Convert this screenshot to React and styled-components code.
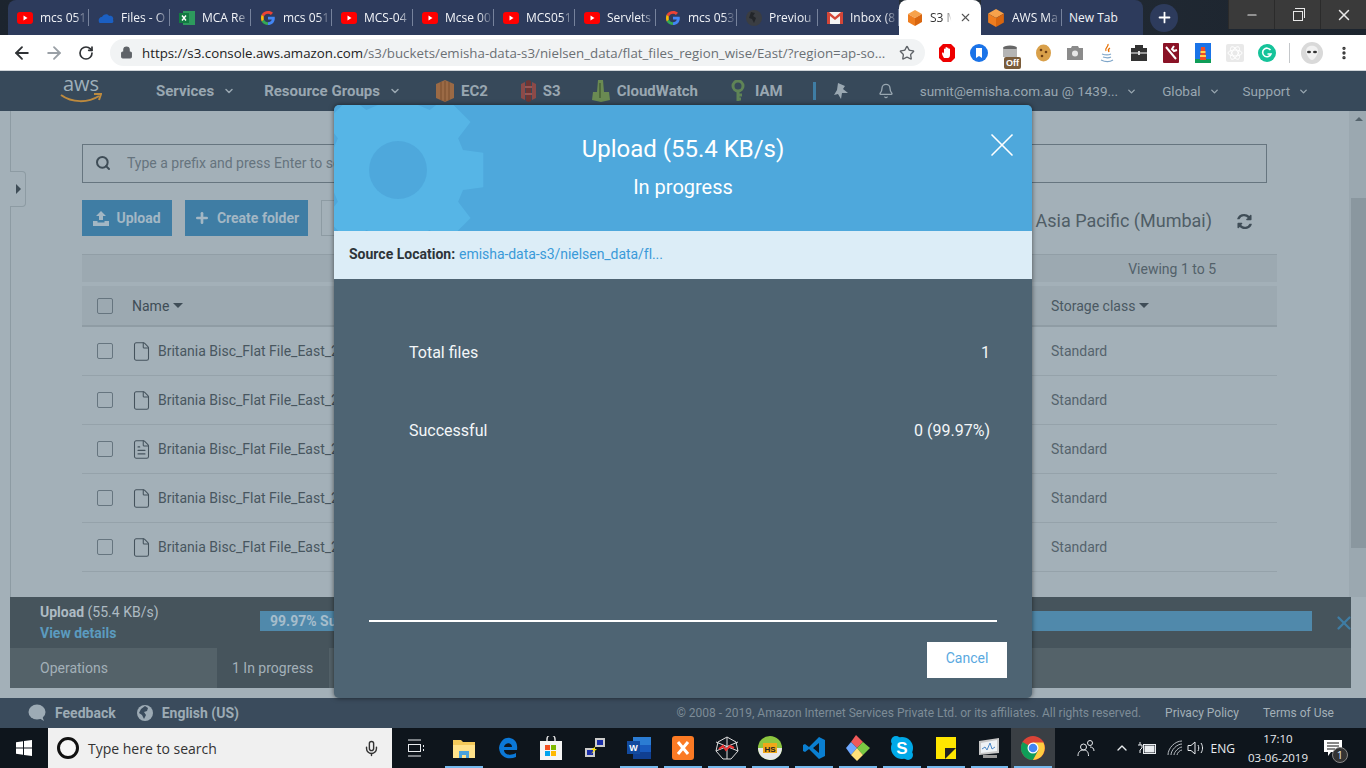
import React from "react";
import styled, { createGlobalStyle } from "styled-components";
import { ArrowLeft, ArrowRight, RotateCw, Lock, Star, Bell, Search, Plus, X, Minus, File, FileText, Mic, ChevronDown, ChevronUp, MoreVertical } from "lucide-react";

const GlobalStyle = createGlobalStyle`
  html, body { margin: 0; padding: 0; background: #a3b0b8; }
  * { box-sizing: border-box; }
`;

const Page = styled.div`
  position: relative;
  width: 1366px;
  height: 768px;
  overflow: hidden;
  display: flex;
  flex-direction: column;
  font-family: Roboto, "Liberation Sans", sans-serif;
`;

/* browser chrome */
const TabStrip = styled.div`
  height: 35px;
  flex: none;
  display: flex;
  align-items: flex-end;
  padding-left: 8px;
  background: #1f2833;
  background-image: linear-gradient(90deg, #1c242e, #27303a 50%, #1c242e);
`;

const Tab = styled.div`
  width: ${(p) => p.$w || 81}px;
  height: 35px;
  flex: none;
  display: flex;
  align-items: center;
  gap: 7px;
  padding-left: ${(p) => (p.$pl === undefined ? 9 : p.$pl)}px;
  font-family: "Open Sans", "Noto Sans", sans-serif;
  font-size: 12px;
  color: ${(p) => (p.$active ? "#333" : "#f2f4f8")};
  background: ${(p) => (p.$active ? "#fff" : "#2d3b5c")};
  border-radius: ${(p) => (p.$active ? "8px 8px 0 0" : p.$last ? "0 8px 0 0" : p.$first ? "8px 0 0 0" : "0")};
  position: relative;
  &::after {
    content: "";
    display: ${(p) => (p.$active || p.$last ? "none" : "block")};
    position: absolute;
    right: 0;
    top: 9px;
    height: 17px;
    width: 1px;
    background: #76829c;
  }
`;

const TabTitle = styled.span`
  flex: 1;
  min-width: 0;
  overflow: hidden;
  white-space: nowrap;
  -webkit-mask-image: ${(p) => (p.$plain ? "none" : "linear-gradient(90deg, #000 70%, transparent 98%)")};
`;

const TabClose = styled(X)`
  margin-right: 9px;
  color: #555;
`;

const NewTab = styled.div`
  width: 28px;
  height: 28px;
  align-self: center;
  border-radius: 50%;
  background: #2d3b5c;
  color: #fff;
  margin-left: 7px;
  display: flex;
  align-items: center;
  justify-content: center;
`;

const WindowControls = styled.div`
  margin-left: auto;
  align-self: flex-start;
  display: flex;
  height: 29px;
`;

const WindowButton = styled.div`
  width: 46px;
  height: 29px;
  background: #3a3a3a;
  border-left: 1px solid #2b2b2b;
  color: #e8e8e8;
  display: flex;
  align-items: center;
  justify-content: center;
`;

const RestoreIcon = styled.div`
  width: 10px;
  height: 10px;
  border: 1px solid #e8e8e8;
  position: relative;
  top: 1px;
  &::before {
    content: "";
    position: absolute;
    left: 1px;
    top: -4px;
    width: 9px;
    height: 9px;
    border-top: 1px solid #e8e8e8;
    border-right: 1px solid #e8e8e8;
  }
`;

const AddressBar = styled.div`
  height: 36px;
  flex: none;
  display: flex;
  align-items: center;
  background: #fff;
  border-bottom: 1px solid #cfd4d8;
  padding-left: 6px;
  color: #4a4d50;
`;

const NavIcon = styled.div`
  width: 32px;
  display: flex;
  justify-content: center;
  color: ${(p) => p.$color || "#2f3235"};
`;

const Omnibox = styled.div`
  width: 815px;
  height: 27px;
  margin-left: 8px;
  border-radius: 14px;
  background: #f1f3f4;
  display: flex;
  align-items: center;
  padding-left: 10px;
  font-family: "Open Sans", "Noto Sans", sans-serif;
  font-size: 13.3px;
  color: #6b7074;
  white-space: nowrap;
`;

const Url = styled.span`
  flex: 1;
  margin-left: 9px;
  b { font-weight: 400; color: #222; }
`;

const BookmarkStar = styled(Star)`
  margin-right: 10px;
  color: #5f6368;
`;

const Extensions = styled.div`
  display: flex;
  align-items: center;
  margin-left: 6px;
`;

const ExtSlot = styled.div`
  width: 32px;
  height: 24px;
  display: flex;
  align-items: center;
  justify-content: center;
  position: relative;
`;

const OffBadge = styled.span`
  position: absolute;
  left: 9px;
  bottom: -4px;
  background: #7a5c3a;
  color: #fff;
  font: 700 9px "Liberation Sans", sans-serif;
  padding: 1px 2px;
  border-radius: 2px;
`;

const ExtDivider = styled.div`
  width: 1px;
  height: 20px;
  background: #c4c7ca;
  margin: 0 6px;
`;

/* aws nav */
const AwsNav = styled.div`
  height: 40px;
  flex: none;
  display: flex;
  align-items: center;
  background: #37495a;
  padding-left: 60px;
  color: #99a7b1;
  white-space: nowrap;
`;

const NavItem = styled.div`
  display: flex;
  align-items: center;
  margin-left: ${(p) => p.$ml || 0}px;
  gap: ${(p) => p.$gap || 7}px;
  font-weight: ${(p) => (p.$light ? 400 : 700)};
  font-size: ${(p) => (p.$light ? 13.5 : 15)}px;
`;

const NavStripe = styled.div`
  width: 3px;
  height: 18px;
  margin-left: 30px;
  background: #3f7da4;
`;

const AwsLogo = styled.div`
  width: 42px;
  height: 30px;
  color: #9fb0bb;
  font: 400 20px/20px "Open Sans", sans-serif;
  text-align: center;
  position: relative;
  top: -2px;
  svg { position: absolute; left: 0; top: 19px; }
`;

/* dimmed console */
const Console = styled.div`
  flex: 1;
  min-height: 0;
  display: flex;
  flex-direction: column;
  background: #a3b0b8;
  padding-left: 10px;
  position: relative;
`;

const ConsoleBody = styled.div`
  flex: 1;
  min-height: 0;
  display: flex;
`;

const Workspace = styled.div`
  flex: 1;
  border-left: 1px solid #8d9ba3;
  padding: 33px 0 0 71px;
  color: #48565f;
`;

const DrawerHandle = styled.div`
  position: absolute;
  left: 10px;
  top: 60px;
  width: 16px;
  height: 36px;
  background: #a3b0b8;
  border: 1px solid #8d9ba3;
  border-left: 0;
  border-radius: 0 4px 4px 0;
  display: flex;
  align-items: center;
  padding-left: 6px;
  &::before {
    content: "";
    border-left: 5px solid #3f4d57;
    border-top: 5px solid transparent;
    border-bottom: 5px solid transparent;
  }
`;

const SearchBox = styled.div`
  width: 1185px;
  height: 39px;
  border: 1px solid #66757f;
  display: flex;
  align-items: center;
  padding: 0 0 1px 12px;
  gap: 16px;
  font-size: 14px;
  color: #66747e;
  svg { color: #3f4d57; }
`;

const Toolbar = styled.div`
  display: flex;
  align-items: center;
  gap: 13px;
  margin-top: 17px;
  height: 36px;
  width: 1185px;
`;

const PrimaryButton = styled.div`
  height: 36px;
  width: ${(p) => p.$w}px;
  background: #3f7da4;
  color: #a3b7c4;
  font-size: 14px;
  font-weight: 700;
  display: flex;
  align-items: center;
  justify-content: center;
  gap: 7px;
`;

const GhostButton = styled.div`
  height: 36px;
  width: 60px;
  border: 1px solid #8d9ba3;
`;

const RegionLabel = styled.div`
  margin-left: auto;
  display: flex;
  align-items: center;
  gap: 25px;
  padding-top: 4px;
  font-size: 18px;
  color: #4f5d66;
  margin-right: 15px;
  svg { color: #3f4d57; margin-top: 3px; }
`;

const ViewingBar = styled.div`
  width: 1195px;
  height: 28px;
  margin-top: 18px;
  background: #9ca9b1;
  border-top: 1px solid #919ea6;
  padding-right: 61px;
  display: flex;
  align-items: center;
  justify-content: flex-end;
  font-size: 14px;
  color: #53616a;
`;

const Row = styled.div`
  width: 1195px;
  height: ${(p) => (p.$head ? 41 : 49)}px;
  margin-top: ${(p) => (p.$head ? 4 : 0)}px;
  display: flex;
  align-items: center;
  padding-left: 15px;
  font-size: 14px;
  background: ${(p) => (p.$head ? "#9ca9b1" : "transparent")};
  border-bottom: ${(p) => (p.$head ? "2px solid #8f9ca4" : "1px solid #95a2aa")};
  color: ${(p) => (p.$head ? "#3f4d57" : "#48565f")};
`;

const Check = styled.div`
  width: 16px;
  height: 16px;
  flex: none;
  border: 1px solid #66757f;
  border-radius: 2px;
`;

const NameCell = styled.div`
  width: ${(p) => (p.$head ? 919 : 920)}px;
  margin-left: ${(p) => (p.$head ? 19 : 18)}px;
  display: flex;
  align-items: center;
  gap: ${(p) => (p.$head ? 4 : 6)}px;
  svg { color: #45535d; flex: none; }
`;

const SortArrow = styled.span`
  width: 0;
  height: 0;
  border-left: 5px solid transparent;
  border-right: 5px solid transparent;
  border-top: 5px solid #3f4d57;
`;

const StorageCell = styled.div`
  display: flex;
  align-items: center;
  gap: 4px;
  color: ${(p) => (p.$head ? "#4a5862" : "#55636c")};
`;

const Scrollbar = styled.div`
  width: 17px;
  flex: none;
  background: #9ba8b0;
  padding: 6px 0 0 2px;
  display: flex;
  flex-direction: column;
  align-items: center;
`;

const ScrollArrow = styled.div`
  border-left: 4px solid transparent;
  border-right: 4px solid transparent;
  border-bottom: 4px solid #55636c;
`;

const ScrollThumb = styled.div`
  width: 15px;
  height: 350px;
  margin-top: 77px;
  background: #8a979f;
`;

const OpsPanel = styled.div`
  height: 91px;
  flex: none;
  margin-bottom: 10px;
  margin-right: 15px;
  background: #46545c;
  display: flex;
  flex-direction: column;
`;

const OpsTop = styled.div`
  height: 51px;
  flex: none;
  display: flex;
  align-items: flex-start;
  padding-left: 30px;
  color: #aebbc3;
  font-size: 14px;
`;

const OpsText = styled.div`
  width: 220px;
  flex: none;
  padding-top: 5px;
  line-height: 21px;
  b { font-weight: 700; }
  a { color: #5b9bbf; font-weight: 700; }
`;

const OpsProgress = styled.div`
  width: 1052px;
  flex: none;
  height: 20px;
  margin-top: 14px;
  background: #5089ab;
  color: #a6bdcb;
  font-weight: 700;
  line-height: 20px;
  padding-left: 10px;
`;

const OpsClose = styled.div`
  flex: none;
  margin: 15px 0 0 21px;
  color: #3f7da4;
  display: flex;
`;

const OpsTabs = styled.div`
  flex: 1;
  display: flex;
  background: #546269;
  color: #a3b0b8;
  font-size: 14px;
  align-items: stretch;
`;

const OpsTab = styled.div`
  width: ${(p) => p.$w}px;
  display: flex;
  align-items: center;
  padding-left: ${(p) => p.$pl}px;
  background: ${(p) => (p.$active ? "#46545c" : "transparent")};
`;

const Footer = styled.div`
  height: 30px;
  flex: none;
  display: flex;
  align-items: center;
  background: #3a4b5c;
  padding-left: 28px;
  color: #9dabb5;
  font-size: 14px;
  font-weight: 700;
  white-space: nowrap;
`;

const FooterItem = styled.div`
  display: flex;
  align-items: center;
  gap: 9px;
  margin-right: 21px;
`;

const FooterLegal = styled.div`
  margin-left: auto;
  display: flex;
  gap: 24px;
  padding-right: 32px;
  font-size: 12px;
  font-weight: 400;
  color: #7d8c97;
  span:nth-child(n + 2) { color: #a3b0b8; }
`;

/* taskbar */
const Taskbar = styled.div`
  height: 40px;
  flex: none;
  display: flex;
  align-items: center;
  background: #0e151c;
  color: #e9ecef;
`;

const StartButton = styled.div`
  width: 48px;
  display: flex;
  justify-content: center;
`;

const TaskViewButton = styled.div`
  width: 38px;
  margin-left: 5px;
  display: flex;
  justify-content: center;
`;

const TaskSearch = styled.div`
  width: 344px;
  height: 40px;
  background: #f0f0f0;
  color: #333;
  display: flex;
  align-items: center;
  padding: 0 12px 0 9px;
  gap: 9px;
  font-family: "Open Sans", sans-serif;
  font-size: 14px;
  svg:last-child { margin-left: auto; color: #333; }
`;

const CortanaRing = styled.div`
  width: 22px;
  height: 22px;
  border-radius: 50%;
  border: 3px solid #111;
  background: #f7f7f7;
`;

const TaskApps = styled.div`
  display: flex;
  height: 40px;
  margin-left: 7px;
`;

const TaskApp = styled.div`
  width: 43.8px;
  height: 40px;
  display: flex;
  align-items: center;
  justify-content: center;
  position: relative;
  background: ${(p) => (p.$active ? "#3a3f44" : "transparent")};
  &::after {
    content: "";
    display: ${(p) => (p.$running ? "block" : "none")};
    position: absolute;
    left: 3px;
    right: 3px;
    bottom: 0;
    height: 2px;
    background: #76b9ed;
  }
`;

const Tray = styled.div`
  flex: 1;
  display: flex;
  align-items: center;
  justify-content: flex-end;
  height: 40px;
  padding-right: 19px;
  font-family: "Open Sans", sans-serif;
  font-size: 12px;
  gap: 10px;
`;

const TraySlot = styled.div`
  display: flex;
  margin-left: ${(p) => p.$ml || 0}px;
`;

const Clock = styled.div`
  width: 66px;
  font-size: 11.5px;
  text-align: center;
  line-height: 19px;
`;

const NoticeIcon = styled.div`
  position: relative;
  width: 28px;
  margin-left: -2px;
  display: flex;
  justify-content: center;
`;

const NoticeCount = styled.span`
  position: absolute;
  right: -1px;
  bottom: -7px;
  width: 16px;
  height: 16px;
  border-radius: 50%;
  background: #333;
  border: 1px solid #888;
  font-size: 11px;
  line-height: 14px;
  text-align: center;
`;

/* modal */
const Modal = styled.div`
  position: absolute;
  left: 334px;
  top: 105px;
  width: 698px;
  height: 593px;
  border-radius: 5px;
  overflow: hidden;
  background: #4e6473;
  box-shadow: 0 0 5px rgba(0, 0, 0, 0.55);
  display: flex;
  flex-direction: column;
  color: #fff;
`;

const ModalHeader = styled.div`
  height: 126px;
  flex: none;
  background: #4ea8dc;
  position: relative;
  overflow: hidden;
  text-align: center;
`;

const GearArt = styled.svg`
  position: absolute;
  left: -24px;
  top: -24px;
`;

const ModalTitle = styled.div`
  position: relative;
  margin-top: 29px;
  font-size: 24px;
  line-height: 30px;
`;

const ModalSubtitle = styled.div`
  position: relative;
  margin-top: 9px;
  font-size: 20px;
  line-height: 28px;
`;

const ModalClose = styled.div`
  position: absolute;
  right: 10px;
  top: 20px;
  display: flex;
`;

const SourceBar = styled.div`
  height: 48px;
  flex: none;
  display: flex;
  align-items: center;
  padding: 0 0 2px 15px;
  gap: 4px;
  background: #dcedf7;
  font-size: 14px;
  color: #3a9ad9;
  b { color: #2d3439; font-weight: 700; }
`;

const SourcePath = styled.span`
  letter-spacing: -0.05px;
`;

const StatList = styled.div`
  flex: 1;
  padding: 35px 42px 0 75px;
`;

const StatRow = styled.div`
  height: 78px;
  display: flex;
  justify-content: space-between;
  font-size: 16px;
  line-height: 78px;
  color: #f3f6f8;
`;

const ProgressLine = styled.div`
  height: 2px;
  flex: none;
  margin: 0 35px;
  background: #fff;
`;

const ModalActions = styled.div`
  height: 76px;
  flex: none;
  padding: 20px 25px 0 0;
  display: flex;
  justify-content: flex-end;
  align-items: flex-start;
`;

const CancelButton = styled.div`
  width: 80px;
  height: 36px;
  padding-bottom: 5px;
  background: #fff;
  color: #5aa9df;
  font-size: 14px;
  display: flex;
  align-items: center;
  justify-content: center;
`;

/* drawings */
const YouTube = () => (
  <svg width="16" height="14" viewBox="0 0 16 14"><rect y="1" width="16" height="12" rx="3" fill="#f00" /><path d="M6.5 4.5 L10.5 7 L6.5 9.5Z" fill="#fff" /></svg>
);
const Cloud = () => (
  <svg width="16" height="14" viewBox="0 0 16 14"><path d="M1 11c-1-3 1-5 3-5 1-3 6-4 7-1 3-1 5 2 4 4 1 1 0 3-1 3H3c-1 0-2 0-2-1z" fill="#1b5fc2" /></svg>
);
const Excel = () => (
  <svg width="16" height="16" viewBox="0 0 16 16"><rect x="4" y="1" width="12" height="14" fill="#2d9a5d" /><rect y="3" width="10" height="10" fill="#127a42" /><path d="M3 5.5l4 5M7 5.5l-4 5" stroke="#fff" strokeWidth="1.4" /></svg>
);
const GoogleG = ({ size = 16 }) => (
  <svg width={size} height={size} viewBox="0 0 16 16">
    <path d="M14.6 6.8H8v2.7h3.8C11.3 11.2 9.9 12.2 8 12.2V15c3.9 0 6.8-2.7 6.8-6.8 0-.5 0-.9-.2-1.4z" fill="#4285f4" />
    <path d="M3.9 9.4L1.7 11.5C2.9 13.6 5.3 15 8 15v-2.8c-1.9 0-3.5-1.2-4.1-2.8z" fill="#34a853" />
    <path d="M3.9 9.4C3.6 8.5 3.6 7.5 3.9 6.6L1.7 4.5C.8 6.4.8 9.6 1.7 11.5z" fill="#fbbc05" />
    <path d="M8 3.8c1.1 0 2.1.4 2.9 1.1L13 2.8C11.7 1.6 10 1 8 1 5.3 1 2.9 2.4 1.7 4.5l2.2 2.1C4.5 5 6.1 3.8 8 3.8z" fill="#ea4335" />
  </svg>
);
const Globe = () => (
  <svg width="16" height="16" viewBox="0 0 16 16"><circle cx="8" cy="8" r="8" fill="#3a3d42" /><path d="M5 2l4 1-2 3 3 2-2 5-2-4-3-1z" fill="#23262a" /></svg>
);
const Gmail = () => (
  <svg width="16" height="14" viewBox="0 0 16 14"><rect y="1" width="16" height="12" fill="#f4f4f4" /><path d="M0 1v12h3V5l5 4 5-4v8h3V1h-2L8 6 2 1z" fill="#d44638" /></svg>
);
const Cube = ({ size = 16 }) => (
  <svg width={size} height={size} viewBox="0 0 16 16">
    <path d="M8 0l7 4-7 4-7-4z" fill="#f7a24b" /><path d="M1 4l7 4v8l-7-4z" fill="#ee7d1f" /><path d="M15 4l-7 4v8l7-4z" fill="#d9660f" />
  </svg>
);
const StopHand = () => (
  <svg width="18" height="20" viewBox="0 0 18 20"><path d="M5 1h8l4 4v10l-4 4H5l-4-4V5z" fill="#e00" /><path d="M6 15c-1-2-2-3-2-5 1-1 2 0 2 1V6a1 1 0 0 1 1.5 0V4.500a1 1 0 0 1 1.5 0V5a1 1 0 0 1 1.5 0v1a1 1 0 0 1 1.5 0v6c0 2-1 3-2 3z" fill="#fff" /></svg>
);
const Bookmark = () => (
  <svg width="18" height="18" viewBox="0 0 18 18"><circle cx="9" cy="9" r="9" fill="#1a73e8" /><path d="M6 4h6v10l-3-2-3 2z" fill="#fff" /></svg>
);
const Cup = () => (
  <svg width="18" height="18" viewBox="0 0 18 18"><ellipse cx="8" cy="4" rx="7" ry="2.5" fill="#666" /><path d="M1 5h14v8H1z" fill="#b5b5b5" /></svg>
);
const Cookie = () => (
  <svg width="17" height="18" viewBox="0 0 17 18"><ellipse cx="8.5" cy="9" rx="7.5" ry="8.5" fill="#d9a04a" /><circle cx="6" cy="6" r="1.3" fill="#6b3d15" /><circle cx="11" cy="8" r="1.3" fill="#6b3d15" /><circle cx="7" cy="12" r="1.3" fill="#6b3d15" /></svg>
);
const Camera = () => (
  <svg width="16" height="15" viewBox="0 0 16 15"><path d="M0 3h4l1-2h6l1 2h4v12H0z" fill="#8b8b8b" /><circle cx="8" cy="8.5" r="3" fill="#e8e8e8" /></svg>
);
const Java = () => (
  <svg width="16" height="20" viewBox="0 0 16 20"><path d="M9 1c1 3-4 4-2 7M11 5c-2 1-2 2-1 4" stroke="#e76f00" strokeWidth="1.3" fill="none" /><path d="M3 11c3 1 7 1 9 0M4 14c3 1 6 1 8 0M2 17c4 2 9 2 12 0" stroke="#7fa6c9" strokeWidth="1.2" fill="none" /></svg>
);
const Bag = () => (
  <svg width="18" height="18" viewBox="0 0 18 18"><path d="M5 4V1h8v3h4v13H1V4z" fill="#333" /><rect x="1" y="8" width="16" height="2" fill="#999" /><rect x="8" y="7" width="2" height="4" fill="#ddd" /></svg>
);
const Wrench = () => (
  <svg width="16" height="20" viewBox="0 0 16 20"><rect width="16" height="20" rx="1" fill="#8a1226" /><path d="M3 4l10 12M11 3l-2 3 2 2 3-1" stroke="#fff" strokeWidth="2" fill="none" /></svg>
);
const Lighthouse = () => (
  <svg width="16" height="20" viewBox="0 0 16 20"><rect width="16" height="20" fill="#1a73e8" /><path d="M0 16h16v4H0z" fill="#0f9d58" /><path d="M6 4h4l1 13H5z" fill="#f44b21" /><rect x="5.5" y="8" width="5" height="2" fill="#ffd34d" /><rect x="5" y="12" width="6" height="2" fill="#ffd34d" /></svg>
);
const Atom = () => (
  <svg width="18" height="18" viewBox="0 0 18 18"><rect width="18" height="18" rx="2" fill="#e9e9e9" /><g stroke="#fff" fill="none"><ellipse cx="9" cy="9" rx="7" ry="3" /><ellipse cx="9" cy="9" rx="7" ry="3" transform="rotate(60 9 9)" /><ellipse cx="9" cy="9" rx="7" ry="3" transform="rotate(120 9 9)" /></g></svg>
);
const Grammarly = () => (
  <svg width="18" height="18" viewBox="0 0 18 18"><circle cx="9" cy="9" r="9" fill="#15c39a" /><path d="M12.5 6a4.3 4.3 0 1 0 .5 4H9.5" stroke="#fff" strokeWidth="1.6" fill="none" /></svg>
);
const Alien = () => (
  <svg width="22" height="22" viewBox="0 0 22 22"><circle cx="11" cy="11" r="11" fill="#d9d9d9" /><path d="M5 9c0-7 12-7 12 0 0 4-4 9-6 9s-6-5-6-9z" fill="#f1f1f1" /><ellipse cx="8" cy="10" rx="2" ry="1.3" fill="#333" /><ellipse cx="14" cy="10" rx="2" ry="1.3" fill="#333" /></svg>
);
const Ec2Icon = () => (
  <svg width="18" height="22" viewBox="0 0 18 22"><path d="M0 4l9-4 9 4v14l-9 4-9-4z" fill="#9b6a45" /><path d="M5 2v18M9 1v20M13 2v18" stroke="#7a4e2e" /></svg>
);
const S3Icon = () => (
  <svg width="15" height="22" viewBox="0 0 15 22"><path d="M0 4l4-2v18l-4-2zM15 4l-4-2v18l4-2z" fill="#8c4a48" /><path d="M5 1l2.5-1L10 1v20l-2.5 1L5 21z" fill="#6e3634" /><path d="M4 7h7M4 14h7" stroke="#a6605e" strokeWidth="1.5" /></svg>
);
const CloudWatchIcon = () => (
  <svg width="18" height="22" viewBox="0 0 18 22"><path d="M6 0h5l1 12h5l1 8-9 2-9-2 1-8h4z" fill="#6a8a52" /><path d="M8 3v15" stroke="#4f6b3d" strokeWidth="2" /></svg>
);
const IamIcon = () => (
  <svg width="14" height="22" viewBox="0 0 14 22"><circle cx="7" cy="6" r="5" fill="none" stroke="#5f8456" strokeWidth="3" /><path d="M7 10v11M7 15h4M7 19h3" stroke="#5f8456" strokeWidth="3" /></svg>
);
const Pin = () => (
  <svg width="14" height="16" viewBox="0 0 14 16"><path d="M4 0l7 3-2 3 5 4-6 0-1 6-3-5-4 1 3-5z" fill="#9aa8b2" /></svg>
);
const AwsSmile = () => (
  <svg width="42" height="11" viewBox="0 0 42 11"><path d="M1 2c11 8 27 8 38 1" stroke="#bd8a3e" strokeWidth="2" fill="none" /><path d="M34 1l7 0-2 6" stroke="#bd8a3e" strokeWidth="2" fill="none" /></svg>
);
const UploadGlyph = () => (
  <svg width="16" height="15" viewBox="0 0 16 15"><path d="M8 0l5 5h-3v4H6V5H3z" fill="#a3b7c4" /><path d="M0 10h4.5v1.5h7V10H16v5H0z" fill="#a3b7c4" /></svg>
);
const Refresh = () => (
  <svg width="15" height="15" viewBox="0 0 512 512"><path fill="currentColor" d="M370 133A168 168 0 0 0 90 170a12 12 0 0 1-12 10H19A12 12 0 0 1 7 166C29 67 118 0 248 0c67 0 128 27 172 71l35-35c15-15 41-4 41 17v135c0 13-11 24-24 24H337c-21 0-32-26-17-41zM24 296h135c21 0 32 26 17 41l-34 42a168 168 0 0 0 280-37 12 12 0 0 1 12-10h59a12 12 0 0 1 12 14C483 445 394 512 264 512c-67 0-128-27-172-71l-35 35c-15 15-41 4-41-17V320c0-13 11-24 24-24z" /></svg>
);
const Bubble = () => (
  <svg width="18" height="18" viewBox="0 0 18 18"><ellipse cx="9" cy="8" rx="8.5" ry="7.5" fill="#9dabb5" /><path d="M11 14l5 3-2-5z" fill="#9dabb5" /></svg>
);
const WorldIcon = () => (
  <svg width="16" height="16" viewBox="0 0 16 16"><circle cx="8" cy="8" r="8" fill="#9dabb5" /><path d="M8 1l3 2-1 3-3 1 2 3-2 4-2-4-3-2 2-4z" fill="#3a4b5c" /></svg>
);
const WinLogo = () => (
  <svg width="16" height="16" viewBox="0 0 16 16"><path d="M0 2.2L7 1.2V7.5H0zM8 1L16 0V7.5H8zM0 8.5H7V14.8L0 13.8zM8 8.5H16V16L8 15z" fill="#fff" /></svg>
);
const TaskView = () => (
  <svg width="18" height="18" viewBox="0 0 18 18" fill="none" stroke="#e9ecef"><path d="M1 1h13M1 17h13" /><rect x="1.5" y="5.5" width="12" height="7" /><path d="M16.5 6v2M16.5 10v2" /></svg>
);
const Explorer = () => (
  <svg width="22" height="20" viewBox="0 0 22 20"><path d="M0 2h8l2 2h12v16H0z" fill="#f3c95a" /><path d="M0 7h22v13H0z" fill="#ffe28a" /><path d="M6 13h10v7h-3v-3H9v3H6z" fill="#4aa3df" /></svg>
);
const Edge = () => (
  <svg width="20" height="22" viewBox="0 0 20 22"><path d="M1 11C2 3 8 0 12 1c5 1 8 5 7 12H6c0 5 7 6 12 3v4c-7 3-16 1-17-9zm5-1h8c0-5-7-5-8 0z" fill="#0b78d7" /></svg>
);
const Store = () => (
  <svg width="22" height="24" viewBox="0 0 22 24"><path d="M7 6V3a4 4 0 0 1 8 0v3" fill="none" stroke="#ddd" strokeWidth="1.5" /><rect y="5" width="22" height="19" fill="#f5f5f5" /><rect x="5" y="9" width="5" height="5" fill="#f25022" /><rect x="11" y="9" width="5" height="5" fill="#7fba00" /><rect x="5" y="15" width="5" height="5" fill="#00a4ef" /><rect x="11" y="15" width="5" height="5" fill="#ffb900" /></svg>
);
const Putty = () => (
  <svg width="22" height="22" viewBox="0 0 22 22"><rect x="11" y="1" width="10" height="9" fill="#ccc" /><rect x="13" y="3" width="6" height="5" fill="#1a2ea8" /><rect x="1" y="11" width="10" height="9" fill="#ccc" /><rect x="3" y="13" width="6" height="5" fill="#1a2ea8" /><path d="M12 9l-5 4 3 0-3 4 6-5-3 0z" fill="#ffe600" /></svg>
);
const Word = () => (
  <svg width="24" height="22" viewBox="0 0 24 22"><path d="M6 0h18v22H6z" fill="#2b7cd3" /><path d="M6 15h18v7H6z" fill="#103f91" /><path d="M6 8h18v7H6z" fill="#185abd" /><rect y="4" width="13" height="13" fill="#124a9e" /><text x="6.5" y="14" fontSize="9" fontWeight="700" fill="#fff" textAnchor="middle" fontFamily="Liberation Sans">W</text></svg>
);
const Xampp = () => (
  <svg width="22" height="24" viewBox="0 0 22 24"><rect width="22" height="24" rx="3" fill="#fb7a24" /><path d="M6 6l10 12M16 6L6 18" stroke="#fff" strokeWidth="3" /></svg>
);
const Spider = () => (
  <svg width="24" height="24" viewBox="0 0 24 24" fill="none" stroke="#ddd"><path d="M12 1l9 5 2 9-7 8H8l-7-8 2-9zM12 1v22M1 15l22-9M23 15L1 6" /><path d="M4 13l4-3 3 4 4-4 4 2" stroke="#e33" strokeWidth="2" /></svg>
);
const HashSuite = () => (
  <svg width="24" height="24" viewBox="0 0 24 24"><circle cx="12" cy="12" r="12" fill="#8cc63f" /><path d="M0 12h24a12 12 0 0 1-24 0z" fill="#e8e8e8" /><rect x="5" y="7" width="14" height="10" fill="#f0a818" /><text x="12" y="15.5" fontSize="8" fontWeight="700" textAnchor="middle" fill="#222" fontFamily="Liberation Sans">HS</text></svg>
);
const VsCode = () => (
  <svg width="24" height="24" viewBox="0 0 24 24"><path d="M17 1l6 3v16l-6 3L7 13l-4 3-2-1V9l2-1 4 3zM17 7l-6 5 6 5z" fill="#0a7fd1" /></svg>
);
const GitGui = () => (
  <svg width="24" height="26" viewBox="0 0 24 26"><path d="M10 0l7 7-6 6-6-6z" fill="#f05a5a" /><path d="M17 7l7 6-7 7-6-7z" fill="#7ac943" /><path d="M5 7l6 6-6 7-5-7z" fill="#6ea8fe" /><path d="M11 13l6 7-6 6-6-6z" fill="#ffe27a" /></svg>
);
const Skype = () => (
  <svg width="24" height="26" viewBox="0 0 24 26"><circle cx="12" cy="13" r="11" fill="#00a9e8" /><circle cx="6" cy="6" r="5" fill="#00a9e8" /><circle cx="18" cy="20" r="5" fill="#00a9e8" /><text x="12" y="19" fontSize="17" fontWeight="700" fill="#fff" textAnchor="middle" fontFamily="Liberation Sans">S</text></svg>
);
const Sticky = () => (
  <svg width="20" height="24" viewBox="0 0 20 24"><rect y="1" width="20" height="22" fill="#ffe600" /><path d="M20 12L9 23V12z" fill="#222" /></svg>
);
const Monitor = () => (
  <svg width="24" height="24" viewBox="0 0 24 24"><path d="M2 5l20-3v15l-20 2z" fill="#c8c8c8" /><path d="M4 7l16-3v11L4 17z" fill="#eef2f5" /><path d="M5 13l3-2 2 3 3-7 2 6 3-2" stroke="#4b88c7" fill="none" /><path d="M6 19h14v3H6z" fill="#999" /></svg>
);
const Chrome = () => (
  <svg width="24" height="24" viewBox="0 0 24 24">
    <circle cx="12" cy="12" r="12" fill="#db4437" />
    <path d="M12 12L1.6 6A12 12 0 0 0 12 24l5-9z" fill="#0f9d58" />
    <path d="M12 6.5h10.4A12 12 0 0 1 12 24l5.5-10z" fill="#ffcd40" />
    <circle cx="12" cy="12" r="5.5" fill="#fff" /><circle cx="12" cy="12" r="4.3" fill="#4285f4" />
  </svg>
);
const People = () => (
  <svg width="18" height="18" viewBox="0 0 18 18" fill="none" stroke="#e9ecef"><circle cx="6.5" cy="8" r="3" /><path d="M1 17c0-4 2-6 5.5-6s5 2 5 6" /><circle cx="13" cy="4" r="2.5" /><path d="M13 8c2 0 4 1 4 4" /></svg>
);
const Battery = () => (
  <svg width="20" height="14" viewBox="0 0 20 14" fill="none" stroke="#e9ecef"><rect x="6.5" y="3.5" width="12" height="9" /><rect x="8" y="5" width="9" height="6" fill="#e9ecef" /><path d="M3 1v3M1 4h4v3l-2 2v3" /></svg>
);
const Wifi = () => (
  <svg width="16" height="16" viewBox="0 0 16 16" fill="none" stroke="#b8bdc2"><path d="M1 15C1 8 8 1 15 1M4 15c0-5 6-11 11-11M7 15c0-3 5-8 8-8M10 15c0-2 3-5 5-5" /></svg>
);
const Speaker = () => (
  <svg width="18" height="16" viewBox="0 0 18 16" fill="none" stroke="#e9ecef"><path d="M1 5.5h3L8 2v12L4 10.5H1z" /><path d="M11 5c1 2 1 4 0 6M14 3c2 3 2 7 0 10" /></svg>
);
const Notice = () => (
  <svg width="18" height="16" viewBox="0 0 18 16"><path d="M0 0h18v12H7l-3 4v-4H0z" fill="#fff" /><path d="M3 3h12M3 6h12M3 9h8" stroke="#111" /></svg>
);

// modal header gear, teeth computed round the hole
const gearPath = (() => {
  const cx = 88, cy = 89, outer = 87, inner = 68, teeth = 8;
  const pts = [];
  for (let i = 0; i < teeth; i++) {
    const a = (i * 2 * Math.PI) / teeth;
    [[-0.3, inner], [-0.2, outer], [0.2, outer], [0.3, inner]].forEach(([d, r]) => {
      pts.push(`${(cx + Math.cos(a + d) * r).toFixed(1)},${(cy + Math.sin(a + d) * r).toFixed(1)}`);
    });
  }
  return "M" + pts.join("L") + "Z";
})();

const tabs = [
  { icon: <YouTube />, title: "mcs 051" },
  { icon: <Cloud />, title: "Files - O" },
  { icon: <Excel />, title: "MCA Re" },
  { icon: <GoogleG />, title: "mcs 051" },
  { icon: <YouTube />, title: "MCS-04" },
  { icon: <YouTube />, title: "Mcse 00" },
  { icon: <YouTube />, title: "MCS051" },
  { icon: <YouTube />, title: "Servlets" },
  { icon: <GoogleG />, title: "mcs 053" },
  { icon: <Globe />, title: "Previou" },
  { icon: <Gmail />, title: "Inbox (8" },
];

const extensions = [<StopHand />, <Bookmark />, <Cup />, <Cookie />, <Camera />, <Java />, <Bag />, <Wrench />, <Lighthouse />, <Atom />, <Grammarly />];

const files = [File, File, FileText, File, File];

const taskApps = [
  { icon: <Explorer />, running: true },
  { icon: <Edge /> },
  { icon: <Store /> },
  { icon: <Putty /> },
  { icon: <Word />, running: true },
  { icon: <Xampp />, running: true },
  { icon: <Spider />, running: true },
  { icon: <HashSuite />, running: true },
  { icon: <VsCode />, running: true },
  { icon: <GitGui />, running: true },
  { icon: <Skype />, running: true },
  { icon: <Sticky />, running: true },
  { icon: <Monitor />, running: true },
  { icon: <Chrome />, running: true, active: true },
];

const App = () => (
  <Page>
    <GlobalStyle />
    <TabStrip>
      {tabs.map((t, i) => (
        <Tab key={i} $first={i === 0}>
          {t.icon}
          <TabTitle>{t.title}</TabTitle>
        </Tab>
      ))}
      <Tab $active $w={82} $pl={8}>
        <Cube />
        <TabTitle>S3 M</TabTitle>
        <TabClose size={13} />
      </Tab>
      <Tab $pl={6}>
        <Cube size={18} />
        <TabTitle>AWS Ma</TabTitle>
      </Tab>
      <Tab $last $pl={7}>
        <TabTitle $plain>New Tab</TabTitle>
      </Tab>
      <NewTab><Plus size={17} strokeWidth={2.5} /></NewTab>
      <WindowControls>
        <WindowButton><Minus size={14} /></WindowButton>
        <WindowButton><RestoreIcon /></WindowButton>
        <WindowButton><X size={18} /></WindowButton>
      </WindowControls>
    </TabStrip>

    <AddressBar>
      <NavIcon><ArrowLeft size={20} strokeWidth={2.2} /></NavIcon>
      <NavIcon $color="#9aa0a6"><ArrowRight size={20} strokeWidth={2.2} /></NavIcon>
      <NavIcon><RotateCw size={16} strokeWidth={2.5} /></NavIcon>
      <Omnibox>
        <Lock size={13} fill="#5f6368" color="#5f6368" />
        <Url><b>https://s3.console.aws.amazon.com</b>/s3/buckets/emisha-data-s3/nielsen_data/flat_files_region_wise/East/?region=ap-so...</Url>
        <BookmarkStar size={16} />
      </Omnibox>
      <Extensions>
        {extensions.map((e, i) => (
          <ExtSlot key={i}>
            {e}
            {i === 2 && <OffBadge>Off</OffBadge>}
          </ExtSlot>
        ))}
        <ExtDivider />
        <ExtSlot><Alien /></ExtSlot>
        <ExtSlot><MoreVertical size={16} color="#333" strokeWidth={3} /></ExtSlot>
      </Extensions>
    </AddressBar>

    <AwsNav>
      <AwsLogo>aws<AwsSmile /></AwsLogo>
      <NavItem $ml={54} $gap={9}>Services <ChevronDown size={12} strokeWidth={3} /></NavItem>
      <NavItem $ml={29} $gap={9}>Resource Groups <ChevronDown size={12} strokeWidth={3} /></NavItem>
      <NavItem $ml={35}><Ec2Icon />EC2</NavItem>
      <NavItem $ml={33}><S3Icon />S3</NavItem>
      <NavItem $ml={31}><CloudWatchIcon />CloudWatch</NavItem>
      <NavItem $ml={33} $gap={10}><IamIcon />IAM</NavItem>
      <NavStripe />
      <NavItem $ml={18}><Pin /></NavItem>
      <NavItem $ml={30}><Bell size={16} /></NavItem>
      <NavItem $ml={26} $light $gap={8}>sumit@emisha.com.au @ 1439... <ChevronDown size={11} strokeWidth={3} /></NavItem>
      <NavItem $ml={25} $light $gap={8}>Global <ChevronDown size={11} strokeWidth={3} /></NavItem>
      <NavItem $ml={23} $light $gap={8}>Support <ChevronDown size={11} strokeWidth={3} /></NavItem>
    </AwsNav>

    <Console>
      <DrawerHandle />
      <ConsoleBody>
        <Workspace>
          <SearchBox>
            <Search size={16} strokeWidth={3} />
            Type a prefix and press Enter to search
          </SearchBox>
          <Toolbar>
            <PrimaryButton $w={90}><UploadGlyph />Upload</PrimaryButton>
            <PrimaryButton $w={123}><Plus size={16} strokeWidth={4} />Create folder</PrimaryButton>
            <GhostButton />
            <RegionLabel>Asia Pacific (Mumbai)<Refresh /></RegionLabel>
          </Toolbar>
          <ViewingBar>Viewing 1 to 5</ViewingBar>
          <Row $head>
            <Check />
            <NameCell $head>Name <SortArrow /></NameCell>
            <StorageCell $head>Storage class <SortArrow /></StorageCell>
          </Row>
          {files.map((Icon, i) => (
            <Row key={i}>
              <Check />
              <NameCell>
                <Icon size={21} strokeWidth={1.2} />
                Britania Bisc_Flat File_East_2018.csv
              </NameCell>
              <StorageCell>Standard</StorageCell>
            </Row>
          ))}
        </Workspace>
        <Scrollbar>
          <ScrollArrow />
          <ScrollThumb />
        </Scrollbar>
      </ConsoleBody>
      <OpsPanel>
        <OpsTop>
          <OpsText><b>Upload</b> (55.4 KB/s)<br /><a>View details</a></OpsText>
          <OpsProgress>99.97% Successful</OpsProgress>
          <OpsClose><X size={22} strokeWidth={2.5} /></OpsClose>
        </OpsTop>
        <OpsTabs>
          <OpsTab $w={207} $pl={30}>Operations</OpsTab>
          <OpsTab $w={112} $pl={15} $active>1 In progress</OpsTab>
        </OpsTabs>
      </OpsPanel>
    </Console>

    <Footer>
      <FooterItem><Bubble />Feedback</FooterItem>
      <FooterItem><WorldIcon />English (US)</FooterItem>
      <FooterLegal>
        <span>© 2008 - 2019, Amazon Internet Services Private Ltd. or its affiliates. All rights reserved.</span>
        <span>Privacy Policy</span>
        <span>Terms of Use</span>
      </FooterLegal>
    </Footer>

    <Taskbar>
      <StartButton><WinLogo /></StartButton>
      <TaskSearch>
        <CortanaRing />
        Type here to search
        <Mic size={17} />
      </TaskSearch>
      <TaskViewButton><TaskView /></TaskViewButton>
      <TaskApps>
        {taskApps.map((a, i) => (
          <TaskApp key={i} $running={a.running} $active={a.active}>{a.icon}</TaskApp>
        ))}
      </TaskApps>
      <Tray>
        <People />
        <TraySlot $ml={9}><ChevronUp size={16} /></TraySlot>
        <TraySlot $ml={-3}><Battery /></TraySlot>
        <TraySlot><Wifi /></TraySlot>
        <TraySlot $ml={-6}><Speaker /></TraySlot>
        <TraySlot $ml={-4}>ENG</TraySlot>
        <Clock>17:10<br />03-06-2019</Clock>
        <NoticeIcon>
          <Notice />
          <NoticeCount>1</NoticeCount>
        </NoticeIcon>
      </Tray>
    </Taskbar>

    <Modal>
      <ModalHeader>
        <GearArt width="220" height="180" viewBox="0 0 220 180">
          <path d={gearPath} fill="#56b5e6" />
          <circle cx="88" cy="89" r="29" fill="#4ea8dc" />
        </GearArt>
        <ModalTitle>Upload (55.4 KB/s)</ModalTitle>
        <ModalSubtitle>In progress</ModalSubtitle>
        <ModalClose><X size={40} strokeWidth={1} /></ModalClose>
      </ModalHeader>
      <SourceBar><b>Source Location:</b> <SourcePath>emisha-data-s3/nielsen_data/fl...</SourcePath></SourceBar>
      <StatList>
        <StatRow><span>Total files</span><span>1</span></StatRow>
        <StatRow><span>Successful</span><span>0 (99.97%)</span></StatRow>
      </StatList>
      <ProgressLine />
      <ModalActions><CancelButton>Cancel</CancelButton></ModalActions>
    </Modal>
  </Page>
);

export default App;
